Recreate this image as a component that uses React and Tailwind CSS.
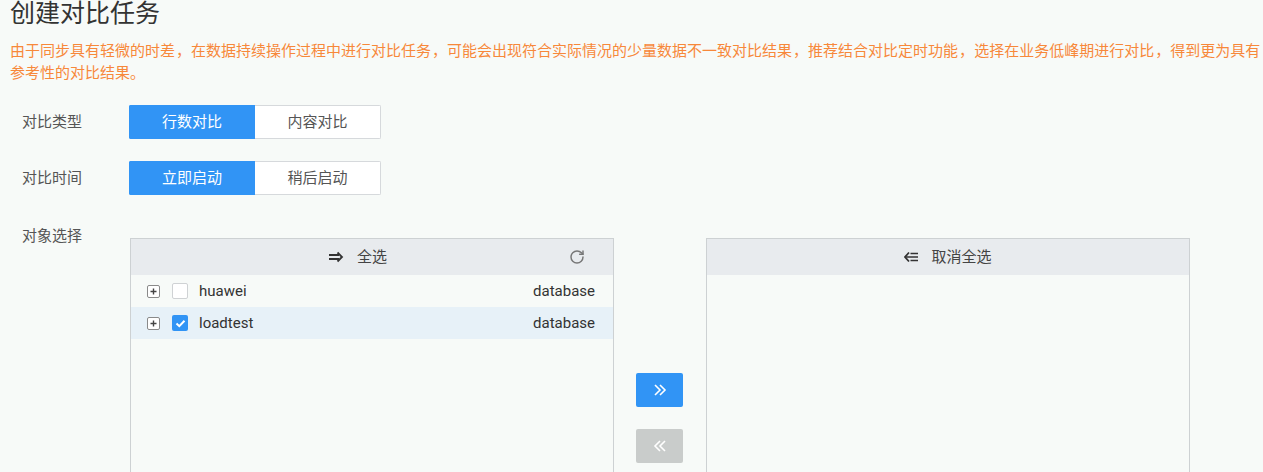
import React from "react";
import { RotateCw } from "lucide-react";

const FONT = { fontFamily: 'Roboto, "Noto Sans CJK SC", sans-serif' };

function C() {
  return <span className="pl-[1px]">，</span>;
}

function SegGroup({ items }) {
  return (
    <div className="flex h-[34px] rounded-[2px] overflow-hidden">
      {items.map((t, i) =>
        i === 0 ? (
          <div key={t} className="w-[126px] flex items-center justify-center bg-[#3194f5] text-white text-[15px] border border-[#3194f5]">
            {t}
          </div>
        ) : (
          <div key={t} className="w-[126px] flex items-center justify-center bg-white text-[#555] text-[15px] border border-l-0 border-[#d6d9dc]">
            {t}
          </div>
        )
      )}
    </div>
  );
}

function ExpandIcon() {
  return (
    <svg width="13" height="13" viewBox="0 0 13 13" className="shrink-0">
      <rect x="0.5" y="0.5" width="12" height="12" rx="1.5" fill="#fff" stroke="#8a8a8a" />
      <path d="M3.5 6.5h6M6.5 3.5v6" stroke="#444" strokeWidth="1.4" />
    </svg>
  );
}

function RightArrowLines() {
  return (
    <svg width="15" height="12" viewBox="0 0 15 12" className="shrink-0">
      <path d="M0 4h10M0 8h10" stroke="#333" strokeWidth="1.8" />
      <path d="M8.5 1.5L13 6l-4.5 4.5" fill="none" stroke="#333" strokeWidth="1.8" />
    </svg>
  );
}

function LeftArrowLines() {
  return (
    <svg width="15" height="12" viewBox="0 0 15 12" className="shrink-0">
      <path d="M5 1.5L1 6l4 4.5" fill="none" stroke="#333" strokeWidth="1.8" />
      <path d="M1 6h13M6.5 2.5h7.5M6.5 9.5h7.5" stroke="#333" strokeWidth="1.6" />
    </svg>
  );
}

function Row({ name, checked }) {
  return (
    <div className={`h-[32px] flex items-center pl-[16px] pr-[18px] ${checked ? "bg-[#e7f1f8]" : ""}`}>
      <ExpandIcon />
      {checked ? (
        <div className="ml-[12px] w-[16px] h-[16px] rounded-[2px] bg-[#3194f5] flex items-center justify-center">
          <svg width="11" height="9" viewBox="0 0 11 9">
            <path d="M1.5 4.5L4.3 7.2 9.5 1.8" fill="none" stroke="#fff" strokeWidth="2" />
          </svg>
        </div>
      ) : (
        <div className="ml-[12px] w-[16px] h-[16px] rounded-[2px] bg-white border border-[#cfd2d4]" />
      )}
      <span className="ml-[11px] text-[15px] text-[#333]">{name}</span>
      <span className="ml-auto text-[15px] text-[#333]">database</span>
    </div>
  );
}

export default function App() {
  return (
    <div className="w-[1263px] h-[472px] overflow-hidden bg-[#f7faf8]" style={FONT}>
      <h1 className="pl-[10px] pt-px text-[25px] leading-[26px] text-[#333] font-normal">创建对比任务</h1>
      <p className="pl-[10px] mt-[13px] text-[15px] leading-[22px] text-[#f7883a]">
        <span className="block whitespace-nowrap">
          由于同步具有轻微的时差<C />在数据持续操作过程中进行对比任务<C />可能会出现符合实际情况的少量数据不一致对比结果<C />推荐结合对比定时功能<C />选择在业务低峰期进行对比<C />得到更为具有
        </span>
        <span className="block">参考性的对比结果。</span>
      </p>
      <div className="mt-[21px] pl-[22px] flex flex-col">
        <div className="flex items-center">
          <div className="w-[107px] text-[15px] text-[#555]">对比类型</div>
          <SegGroup items={["行数对比", "内容对比"]} />
        </div>
        <div className="flex items-center mt-[22px]">
          <div className="w-[107px] text-[15px] text-[#555]">对比时间</div>
          <SegGroup items={["立即启动", "稍后启动"]} />
        </div>
        <div className="flex mt-[30px]">
          <div className="w-[108px] text-[15px] leading-[22px] text-[#555]">对象选择</div>
          <div className="flex mt-[13px]">
            <div className="w-[484px] h-[300px] border border-[#cdd1d3] flex flex-col">
              <div className="h-[36px] bg-[#e8ebee] flex items-center justify-center pr-[28px] relative text-[15px] text-[#444]">
                <RightArrowLines />
                <span className="ml-[13px]">全选</span>
                <RotateCw size={16} strokeWidth={2.2} className="absolute right-[28px] top-[10px] text-[#777]" />
              </div>
              <Row name="huawei" />
              <Row name="loadtest" checked />
            </div>
            <div className="w-[92px] flex flex-col items-start pl-[22px] pt-[135px]">
              <div className="w-[47px] h-[34px] rounded-[2px] bg-[#3194f5] flex items-center justify-center">
                <svg width="14" height="14" viewBox="0 0 14 14">
                  <path d="M2 2l5 5-5 5M7 2l5 5-5 5" fill="none" stroke="#fff" strokeWidth="1.6" />
                </svg>
              </div>
              <div className="mt-[22px] w-[47px] h-[34px] rounded-[2px] bg-[#c9cccb] flex items-center justify-center">
                <svg width="14" height="14" viewBox="0 0 14 14">
                  <path d="M7 2L2 7l5 5M12 2L7 7l5 5" fill="none" stroke="#fff" strokeWidth="1.6" />
                </svg>
              </div>
            </div>
            <div className="w-[484px] h-[300px] border border-[#cdd1d3] flex flex-col">
              <div className="h-[36px] bg-[#e8ebee] flex items-center justify-center text-[15px] text-[#444]">
                <LeftArrowLines />
                <span className="ml-[12px]">取消全选</span>
              </div>
            </div>
          </div>
        </div>
      </div>
    </div>
  );
}
